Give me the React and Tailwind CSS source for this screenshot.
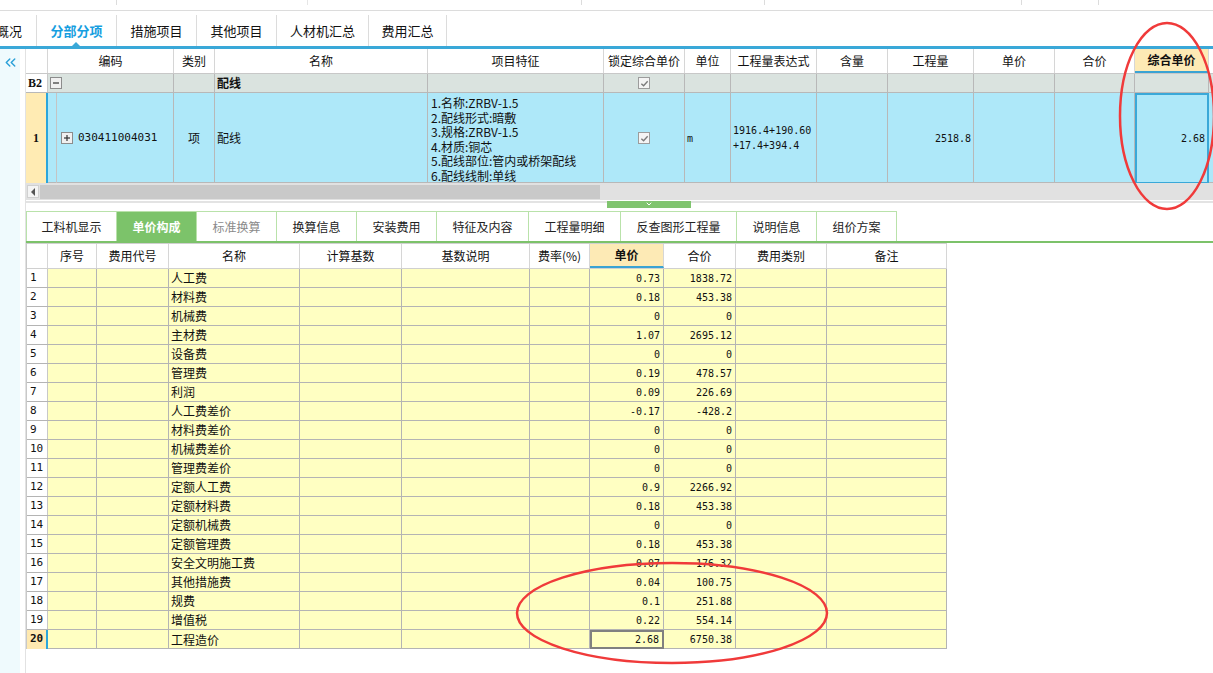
import React from 'react';
import { ChevronsLeft, ChevronDown } from 'lucide-react';

const TOP_COLS = 'grid grid-cols-[22px_126px_41px_213px_176px_81px_46px_86px_71px_86px_81px_80px_74px]';
const BOT_COLS = 'grid grid-cols-[21px_49px_72px_131px_102px_128px_60px_74px_72px_91px_120px]';
const MONO = "font-['DejaVu_Sans_Mono',monospace] text-[10px]";

const topHeaders = ['', '编码', '类别', '名称', '项目特征', '锁定综合单价', '单位', '工程量表达式', '含量', '工程量', '单价', '合价', '综合单价'];
const botHeaders = ['', '序号', '费用代号', '名称', '计算基数', '基数说明', '费率(%)', '单价', '合价', '费用类别', '备注'];

const rows = [
  ['人工费', '0.73', '1838.72'],
  ['材料费', '0.18', '453.38'],
  ['机械费', '0', '0'],
  ['主材费', '1.07', '2695.12'],
  ['设备费', '0', '0'],
  ['管理费', '0.19', '478.57'],
  ['利润', '0.09', '226.69'],
  ['人工费差价', '-0.17', '-428.2'],
  ['材料费差价', '0', '0'],
  ['机械费差价', '0', '0'],
  ['管理费差价', '0', '0'],
  ['定额人工费', '0.9', '2266.92'],
  ['定额材料费', '0.18', '453.38'],
  ['定额机械费', '0', '0'],
  ['定额管理费', '0.18', '453.38'],
  ['安全文明施工费', '0.07', '176.32'],
  ['其他措施费', '0.04', '100.75'],
  ['规费', '0.1', '251.88'],
  ['增值税', '0.22', '554.14'],
  ['工程造价', '2.68', '6750.38'],
];

const features = [
  '1.名称:ZRBV-1.5',
  '2.配线形式:暗敷',
  '3.规格:ZRBV-1.5',
  '4.材质:铜芯',
  '5.配线部位:管内或桥架配线',
  '6.配线线制:单线',
];

const topTabs = [
  { label: '分部分项', w: 'w-[80px]', active: true },
  { label: '措施项目', w: 'w-[80px]' },
  { label: '其他项目', w: 'w-[80px]' },
  { label: '人材机汇总', w: 'w-[92px]' },
  { label: '费用汇总', w: 'w-[78px]' },
];

const botTabs = [
  { label: '工料机显示', w: 'w-[91px] border-l' },
  { label: '单价构成', w: 'w-[80px]', active: true },
  { label: '标准换算', w: 'w-[80px]', muted: true },
  { label: '换算信息', w: 'w-[80px]' },
  { label: '安装费用', w: 'w-[80px]' },
  { label: '特征及内容', w: 'w-[92px]' },
  { label: '工程量明细', w: 'w-[92px]' },
  { label: '反查图形工程量', w: 'w-[116px]' },
  { label: '说明信息', w: 'w-[80px]' },
  { label: '组价方案', w: 'w-[80px]' },
];

const Check = () => (
  <div className="w-[12px] h-[12px] border border-[#9c9c9c] bg-[#f4f4f4] flex items-center justify-center">
    <svg viewBox="0 0 10 10" className="w-[9px] h-[9px]">
      <path d="M1.5 5.2 L4 7.5 L8.5 2.5" fill="none" stroke="#7a7a7a" strokeWidth="1.5" />
    </svg>
  </div>
);

const TreeBox = ({ plus }) => (
  <div className="w-[12px] h-[12px] border border-[#8c8c8c] bg-[#f0f0f0] flex items-center justify-center shrink-0">
    <svg viewBox="0 0 10 10" className="w-[10px] h-[10px]">
      <path d="M2 5 H8" stroke="#333" strokeWidth="1.2" />
      {plus && <path d="M5 2 V8" stroke="#333" strokeWidth="1.2" />}
    </svg>
  </div>
);

export default function App() {
  return (
    <div className="relative w-[1213px] h-[673px] overflow-hidden bg-white text-[12px] text-[#111] font-['Noto_Sans_CJK_SC',sans-serif]">
      {/* top strip */}
      <div className="h-[11px] border-b border-[#dcdcdc] flex">
        <div className="w-[117px] h-[5px] border-r border-[#dcdcdc]" />
        <div className="w-[191px] h-[5px] border-r border-[#e6e6e6]" />
        <div className="w-[274px] h-[5px] border-r border-[#dcdcdc]" />
        <div className="w-[183px] h-[5px] border-r border-[#dcdcdc]" />
        <div className="w-[257px] h-[5px] border-r border-[#dcdcdc]" />
        <div className="w-[77px] h-[5px] border-r border-[#dcdcdc]" />
      </div>

      {/* main tabs */}
      <div className="h-[38px] flex border-b-[3px] border-[#3aa8d8] pt-[4px]">
        <div className="w-[37px] border-r border-[#dcdcdc] overflow-hidden flex items-center">
          <span className="-ml-[4px] text-[13px] leading-none">概况</span>
        </div>
        {topTabs.map((t) => (
          <div
            key={t.label}
            className={`relative ${t.w} border-r border-[#dcdcdc] flex items-center justify-center text-[13px] leading-none ${t.active ? 'text-[#169ee0] font-bold' : 'text-[#111]'}`}
          >
            {t.label}
            {t.active && (
              <div className="absolute bottom-0 left-[35px] w-0 h-0 border-l-[4px] border-r-[4px] border-b-[4px] border-l-transparent border-r-transparent border-b-[#3aa8d8]" />
            )}
          </div>
        ))}
      </div>

      <div className="flex h-[624px]">
        {/* sidebar */}
        <div className="w-[20px] bg-[#effafd] pt-[5px] pl-[2px]">
          <ChevronsLeft size={17} strokeWidth={2} className="text-[#2aa0d8]" />
        </div>
        <div className="w-[5px]" />
        <div className="flex-1 border-l border-[#e2e2e2] flex flex-col">
          {/* top table header */}
          <div className={`${TOP_COLS} h-[25px] border-b border-[#c8c8c8]`}>
            {topHeaders.map((h, i) => (
              <div
                key={i}
                className={`border-r border-[#d6d6d6] flex items-center justify-center leading-none ${i === 12 ? 'bg-[#fdeab5] font-bold border-b-2 border-b-[#3aa3d3]' : ''}`}
              >
                {h}
              </div>
            ))}
          </div>

          {/* B2 row */}
          <div className={`${TOP_COLS} h-[19px] border-b border-[#b8b8b8] bg-[#dae3df]`}>
            <div className="bg-white border-r border-[#c8c8c8] flex items-center pl-[2px] font-['Liberation_Serif',serif] font-bold text-[12px] leading-none">B2</div>
            <div className="border-r border-[#b8b8b8] flex items-center pl-[2px]"><TreeBox /></div>
            <div className="border-r border-[#b8b8b8]" />
            <div className="border-r border-[#b8b8b8] flex items-center pl-[2px] font-bold leading-none">配线</div>
            <div className="border-r border-[#b8b8b8]" />
            <div className="border-r border-[#b8b8b8] flex items-center justify-center"><Check /></div>
            {Array.from({ length: 7 }).map((_, i) => (
              <div key={i} className="border-r border-[#b8b8b8]" />
            ))}
          </div>

          {/* row 1 */}
          <div className={`${TOP_COLS} h-[90px] border-b border-[#b8b8b8] bg-[#aee8f9]`}>
            <div className="bg-[#ffebb3] border-r-2 border-[#2ba6dc] flex items-center justify-center font-['Liberation_Serif',serif] font-bold text-[12px]">1</div>
            <div className="border-r border-[#b8b8b8] flex items-center">
              <div className="w-[8px]" />
              <div className="w-px self-stretch bg-[#c4c4c4]" />
              <div className="w-[4px]" />
              <TreeBox plus />
              <span className={`${MONO} ml-[5px] text-[11px]`}>030411004031</span>
            </div>
            <div className="border-r border-[#b8b8b8] flex items-center justify-center leading-none">项</div>
            <div className="border-r border-[#b8b8b8] flex items-center pl-[2px] leading-none">配线</div>
            <div className="border-r border-[#b8b8b8] pl-[3px] pt-[3px] leading-[14.6px]">
              {features.map((f) => (
                <div key={f}>{f}</div>
              ))}
            </div>
            <div className="border-r border-[#b8b8b8] flex items-center justify-center"><Check /></div>
            <div className={`border-r border-[#b8b8b8] flex items-center pl-[2px] ${MONO}`}>m</div>
            <div className={`border-r border-[#b8b8b8] flex flex-col justify-center pl-[2px] leading-[15px] ${MONO} text-[10px]`}>
              <div>1916.4+190.60</div>
              <div>+17.4+394.4</div>
            </div>
            <div className="border-r border-[#b8b8b8]" />
            <div className={`border-r border-[#b8b8b8] flex items-center justify-end pr-[2px] ${MONO}`}>2518.8</div>
            <div className="border-r border-[#b8b8b8]" />
            <div className="border-r border-[#b8b8b8]" />
            <div className={`border-2 border-[#3aa8d8] flex items-center justify-end pr-[2px] ${MONO}`}>2.68</div>
          </div>

          {/* horizontal scrollbar */}
          <div className="h-[17px] bg-[#e1e1e1] flex items-center pl-[1px] gap-[1px]">
            <div className="w-[12px] h-[13px] bg-[#f4f4f4] border border-[#d0d0d0] flex items-center justify-center">
              <div className="w-0 h-0 border-t-[4px] border-b-[4px] border-r-[4px] border-t-transparent border-b-transparent border-r-[#555]" />
            </div>
            <div className="w-[560px] h-[14px] bg-[#c9c9c9]" />
          </div>

          {/* splitter */}
          <div className="h-[10px] mt-[1px] border-t-2 border-[#e3e3e3]">
            <div className="ml-[581px] -mt-[2px] w-[84px] h-[7px] bg-[#80c46f] flex justify-center items-start">
              <ChevronDown size={8} strokeWidth={3} className="text-white -mt-[1px]" />
            </div>
          </div>

          {/* bottom tabs */}
          <div className="h-[32px] flex border-b-2 border-[#7cc26a]">
            {botTabs.map((t) => (
              <div
                key={t.label}
                className={`${t.w} border-t border-r border-[#b9e2aa] flex items-center justify-center leading-none ${t.active ? 'bg-[#7cc36a] text-white font-bold' : t.muted ? 'text-[#8a8a8a]' : 'text-[#222]'}`}
              >
                {t.label}
              </div>
            ))}
          </div>

          {/* bottom table */}
          <div className="w-fit border-l border-[#c8c8c8]">
            <div className={`${BOT_COLS} h-[26px] border-t border-b border-[#d0d0d0]`}>
              {botHeaders.map((h, i) => (
                <div
                  key={i}
                  className={`border-r border-[#d6d6d6] flex items-center justify-center leading-none ${i === 7 ? 'bg-[#fdeab5] font-bold border-b-2 border-b-[#3aa3d3]' : ''}`}
                >
                  {h}
                </div>
              ))}
            </div>
            {rows.map(([name, price, total], i) => {
              const last = i === rows.length - 1;
              return (
                <div key={i} className={`${BOT_COLS} h-[19px] border-b border-[#b4b4b4] bg-[#ffffc2]`}>
                  <div
                    className={`flex items-center pl-[3px] ${MONO} text-[11px] ${last ? 'bg-[#ffe9b0] border-r-2 border-[#2ba6dc] font-bold' : 'bg-white border-r border-[#c8c8c8]'}`}
                  >
                    {i + 1}
                  </div>
                  <div className="border-r border-[#b4b4b4]" />
                  <div className="border-r border-[#b4b4b4]" />
                  <div className="border-r border-[#b4b4b4] flex items-center pl-[2px] leading-none">{name}</div>
                  <div className="border-r border-[#b4b4b4]" />
                  <div className="border-r border-[#b4b4b4]" />
                  <div className="border-r border-[#b4b4b4]" />
                  <div
                    className={`flex items-center justify-end pr-[3px] ${MONO} ${last ? 'border-2 border-[#808080]' : 'border-r border-[#b4b4b4]'}`}
                  >
                    {price}
                  </div>
                  <div className={`border-r border-[#b4b4b4] flex items-center justify-end pr-[3px] ${MONO}`}>{total}</div>
                  <div className="border-r border-[#b4b4b4]" />
                  <div className="border-r border-[#b4b4b4]" />
                </div>
              );
            })}
          </div>
        </div>
      </div>

      {/* red annotation ellipses */}
      <svg className="absolute inset-0 pointer-events-none" width="1213" height="673" viewBox="0 0 1213 673">
        <ellipse cx="1167" cy="116" rx="47" ry="93" fill="none" stroke="#f03a3a" strokeWidth="2.5" />
        <ellipse cx="672" cy="613" rx="155" ry="50" fill="none" stroke="#f03a3a" strokeWidth="2.5" />
      </svg>
    </div>
  );
}
